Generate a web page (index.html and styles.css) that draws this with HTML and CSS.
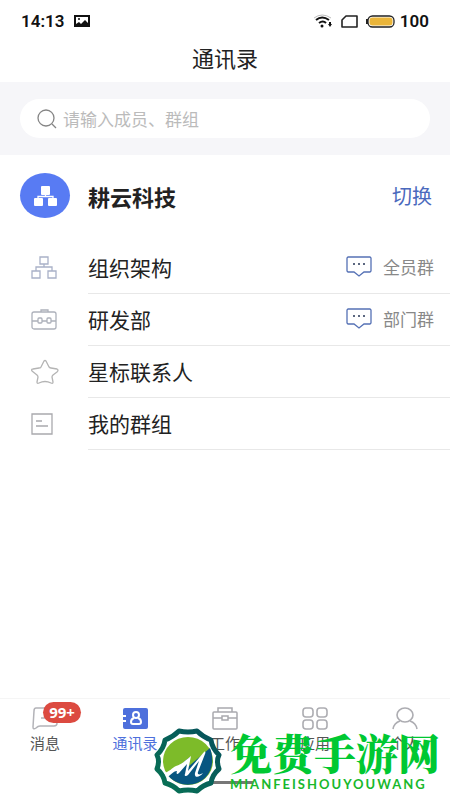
FILE: index.html
```html
<!DOCTYPE html>
<html lang="zh-CN">
<head>
  <meta charset="utf-8">
  <meta name="viewport" content="width=device-width, initial-scale=1">
  <title>通讯录</title>
  <link rel="stylesheet" href="styles.css">
</head>
<body>
  <div class="app">
    <div class="status-bar">
      <span class="time">14:13</span>
      <svg class="photo-icon" width="16" height="12" viewBox="0 0 16 12">
        <rect width="16" height="12" fill="#111"/>
        <path d="M2 2h12v6l-3-3-4 4-2-2-3 2z" fill="#fff"/>
        <circle cx="5" cy="4" r="1" fill="#111"/>
      </svg>
      <div class="status-right">
        <svg width="20" height="16" viewBox="0 0 20 16" fill="none" stroke-width="2">
          <path d="M1 5q8-6 17 0" stroke="#bbb" stroke-width="1"/>
          <path d="M3 7q6-5 13 0M6 10q4-3 7 0" stroke="#111"/>
          <circle cx="9" cy="13" r="1.5" fill="#111"/>
          <path d="M15 11h4l-2 3zM16 9h2v3h-2z" fill="#111"/>
        </svg>
        <svg width="17" height="13" viewBox="0 0 17 13">
          <path d="M5 1h11v11H1V5z" fill="none" stroke="#222" stroke-width="1.6" stroke-linejoin="round"/>
        </svg>
        <svg class="battery" width="29" height="13" viewBox="0 0 29 13">
          <path d="M2 4v5H0V4z" fill="#222"/>
          <rect x="2" y="1" width="26" height="11" rx="4.5" fill="#fff" stroke="#222" stroke-width="1.3"/>
          <rect x="3.5" y="2.5" width="23" height="8" rx="3" fill="#eab53a"/>
        </svg>
        <span class="percent">100</span>
      </div>
    </div>

    <h1 class="title">通讯录</h1>

    <div class="search">
      <label class="search-box">
        <svg width="20" height="20" viewBox="0 0 20 20" fill="none" stroke="#858585" stroke-width="1.3">
          <circle cx="9" cy="9" r="8"/>
          <path d="M15 15l4 4"/>
        </svg>
        <input type="text" placeholder="请输入成员、群组" aria-label="搜索">
      </label>
    </div>

    <div class="company">
      <div class="avatar">
        <svg width="24" height="22" viewBox="0 0 24 22" fill="#fff">
          <rect x="8" y="1" width="9" height="9" rx="1"/>
          <rect x="1" y="13" width="9" height="8" rx="1"/>
          <rect x="15" y="13" width="9" height="8" rx="1"/>
          <path d="M12.5 9v3M5 14v-2.500h15V14" fill="none" stroke="#fff" stroke-width="1.3"/>
        </svg>
      </div>
      <h2>耕云科技</h2>
      <button class="switch">切换</button>
    </div>

    <ul class="list">
      <li>
        <svg class="icon" width="28" height="26" viewBox="0 0 28 26" fill="none" stroke="#a9b1c8" stroke-width="1.3">
          <path d="M9 2h8v7H9zM1 16h8v7H1zM17 16h8v7h-8zM13 9v3M5 16v-4h16v4"/>
        </svg>
        <div class="row">
          <a href="#">组织架构</a>
          <button class="chat">
            <svg width="26" height="22" viewBox="0 0 26 22">
              <path d="M2 1h22l1 1v13l-1 1h-6l-5 4-5-4H2l-1-1V2z" fill="none" stroke="#5571b5" stroke-width="1.3"/>
              <path d="M7 8h2M12 8h2M17 8h2" stroke="#5b6780" stroke-width="2"/>
            </svg>
            <span>全员群</span>
          </button>
        </div>
      </li>
      <li>
        <svg class="icon" width="28" height="26" viewBox="0 0 28 26" fill="none" stroke="#adb1bb" stroke-width="1.3">
          <rect x="1" y="5" width="24" height="17" rx="2"/>
          <path d="M10 5V3h7v2M1 14h6M11 14h5M20 14h5"/>
          <rect x="7" y="11" width="4" height="5" rx="1"/>
          <rect x="16" y="11" width="4" height="5" rx="1"/>
        </svg>
        <div class="row">
          <a href="#">研发部</a>
          <button class="chat">
            <svg width="26" height="22" viewBox="0 0 26 22">
              <path d="M2 1h22l1 1v13l-1 1h-6l-5 4-5-4H2l-1-1V2z" fill="none" stroke="#5571b5" stroke-width="1.3"/>
              <path d="M7 8h2M12 8h2M17 8h2" stroke="#5b6780" stroke-width="2"/>
            </svg>
            <span>部门群</span>
          </button>
        </div>
      </li>
      <li>
        <svg class="icon" width="28" height="26" viewBox="0 0 28 26" fill="none" stroke="#b4b4b4" stroke-width="1.3" stroke-linejoin="round">
          <path d="M13 2q1-1 2 0l3 6q1 1 2 1l6 1q2 1 0 3l-4 3q-1 1-1 2l1 5q0 2-2 1-6-3-12 0-2 1-2-1l1-5q0-1-1-2l-5-4q-1-2 1-2l6-1q2 0 2-1z"/>
        </svg>
        <div class="row"><a href="#">星标联系人</a></div>
      </li>
      <li>
        <svg class="icon" width="28" height="26" viewBox="0 0 28 26" fill="none" stroke="#a9a9ad" stroke-width="1.3">
          <path d="M1 3h20v20H1zM5 10h6M5 15h12"/>
        </svg>
        <div class="row"><a href="#">我的群组</a></div>
      </li>
    </ul>

    <nav class="tabs">
      <a href="#">
        <svg width="26" height="24" viewBox="0 0 26 24" fill="none" stroke="#b3b3b8" stroke-width="1.5">
          <path d="M4 1h18q3 0 3 3v12q0 3-3 3H8q-2 0-4 2-3 2-3-1L2 4q0-3 2-3zM9 11h8"/>
        </svg>
        <span>消息</span>
        <b class="badge">99+</b>
      </a>
      <a href="#" class="active">
        <svg width="26" height="24" viewBox="0 0 26 24">
          <rect x="1" y="1" width="25" height="21" rx="2" fill="#4e70dc"/>
          <path d="M0 9h4M0 14h4" stroke="#fff" stroke-width="2"/>
          <circle cx="14" cy="8" r="3" fill="none" stroke="#fff" stroke-width="2"/>
          <path d="M12 11q-3 1-3 4 0 2 2 2h6q2 0 2-2 0-3-3-4" fill="none" stroke="#fff" stroke-width="2"/>
        </svg>
        <span>通讯录</span>
      </a>
      <a href="#">
        <svg width="26" height="24" viewBox="0 0 26 24" fill="none" stroke="#a9a9ae" stroke-width="1.5">
          <rect x="1" y="5" width="24" height="17" rx="1"/>
          <path d="M6 5V1h14v4M1 11h9M16 11h9M10 9h6v4h-6z"/>
        </svg>
        <span>工作</span>
      </a>
      <a href="#">
        <svg width="26" height="24" viewBox="0 0 26 24" fill="none" stroke="#adadb2" stroke-width="1.6">
          <rect x="1" y="1" width="10" height="9" rx="3"/>
          <rect x="15" y="1" width="10" height="9" rx="3"/>
          <rect x="1" y="13" width="10" height="9" rx="3"/>
          <rect x="15" y="13" width="10" height="9" rx="3"/>
        </svg>
        <span>应用</span>
      </a>
      <a href="#">
        <svg width="26" height="24" viewBox="0 0 26 24" fill="none" stroke="#adadb2" stroke-width="1.6">
          <ellipse cx="13" cy="8" rx="8" ry="7"/>
          <path d="M8 14q-6 2-7 8M18 14q6 2 7 8"/>
        </svg>
        <span>个人</span>
      </a>
    </nav>

    <div class="home-bar"></div>

    <div class="watermark">
      <svg width="68" height="66" viewBox="0 0 68 66">
        <defs>
          <linearGradient id="ring" x1="0" y1="1" x2="1" y2="0">
            <stop offset="0" stop-color="#087354"/>
            <stop offset="1" stop-color="#06505c"/>
          </linearGradient>
        </defs>
        <path d="M25 3q9 2 18 0 6 6 14 9 1 8 8 15-3 6 0 14-7 6-8 14-8 2-14 8-9-2-18 0-6-6-14-8-1-8-8-14 3-8 0-14 7-7 8-15 8-3 14-9z" fill="#fff" stroke="url(#ring)" stroke-width="5" stroke-linejoin="round"/>
        <ellipse cx="34" cy="33" rx="25" ry="24" fill="#7dbb29"/>
        <path d="M12 45c9 0 14-9 24-16l-1 9L56 20c4 11 3 22-5 30-11 10-29 9-39-5z" fill="#075681"/>
        <path d="M10 45c5-1 8-5 12-7 6-2 9-5 15-10l-3 15 16-19c1-1 2 0 1 2l-7 18c-1 3 2 3 5 1-4 5-9 5-8 0l4-12-11 14c-2 2-4 1-3-1l2-10-8 9c-2 2-3 1-2-2-4 0-7 5-10 6z" fill="#fff"/>
      </svg>
      <div class="brand">
        <strong>免费手游网</strong>
        <span>MIANFEISHOUYOUWANG</span>
      </div>
    </div>
  </div>
</body>
</html>
```
FILE: styles.css
```css
* {
  box-sizing: border-box;
}

body {
  margin: 0;
  background: #fff;
  color: #222;
  font-family: "Noto Sans CJK SC", sans-serif;
}

.app {
  position: relative;
  display: flex;
  flex-direction: column;
  min-height: 100vh;
}

.status-bar {
  display: flex;
  align-items: center;
  height: 42px;
  padding: 0 21px;
  font-family: Roboto, sans-serif;
  font-size: 17px;
  font-weight: 600;
  color: #111;
}

.photo-icon {
  margin-left: 10px;
}

.status-right {
  display: flex;
  align-items: center;
  gap: 8px;
  margin-left: auto;
}

.percent {
  margin-left: -3px;
}

.title {
  height: 40px;
  margin: 0;
  font-size: 22px;
  font-weight: 400;
  line-height: 30px;
  text-align: center;
}

.search {
  padding: 17px 20px;
  background: #f6f6f9;
}

.search-box {
  display: flex;
  align-items: center;
  gap: 6px;
  height: 39px;
  padding: 0 17px;
  border-radius: 20px;
  background: #fff;
}

.search-box input {
  flex: 1;
  min-width: 0;
  padding: 0;
  border: none;
  outline: none;
  background: none;
  font: inherit;
  font-size: 17px;
}

.search-box input::placeholder {
  color: #bbb;
}

.company {
  display: flex;
  align-items: center;
  height: 87px;
  padding: 0 18px 6px 20px;
}

.avatar {
  display: flex;
  align-items: center;
  justify-content: center;
  width: 50px;
  height: 45px;
  border-radius: 50%;
  background: #587bf3;
}

.company h2 {
  flex: 1;
  margin: 0 0 0 18px;
  font-size: 22px;
  line-height: 32px;
  font-weight: 700;
}

button {
  padding: 0;
  border: none;
  background: none;
  font: inherit;
  cursor: pointer;
}

.switch {
  color: #4a69bd;
  font-size: 20px;
}

.list {
  flex: 1;
  margin: 0;
  padding: 0;
  list-style: none;
}

.list li {
  display: flex;
  align-items: center;
  height: 52px;
  padding-left: 31px;
}

.row {
  display: flex;
  flex: 1;
  align-items: center;
  justify-content: space-between;
  height: 52px;
  margin-left: 29px;
  padding: 0 16px 2px 0;
  border-bottom: 1px solid #e8e8e8;
}

.row a {
  color: #222;
  font-size: 21px;
  text-decoration: none;
}

.chat {
  display: flex;
  align-items: center;
  gap: 11px;
  color: #888;
  font-size: 17px;
}

.tabs {
  display: flex;
  height: 102px;
  padding-top: 8px;
  border-top: 1px solid #f5f5f5;
}

.tabs a {
  position: relative;
  display: flex;
  flex: 1;
  flex-direction: column;
  align-items: center;
  color: #555;
  font-size: 15px;
  line-height: 24px;
  text-decoration: none;
}

.tabs .active {
  color: #4e70dc;
}

.badge {
  position: absolute;
  top: -5px;
  left: 43px;
  width: 38px;
  border-radius: 11px;
  background: #dc4a40;
  color: #fff;
  font-family: "Noto Sans", sans-serif;
  font-size: 15px;
  line-height: 21px;
  text-align: center;
}

.home-bar {
  position: absolute;
  bottom: 16px;
  left: 50%;
  width: 56px;
  height: 3px;
  margin-left: -28px;
  background: #777;
}

.watermark {
  position: absolute;
  right: 10px;
  bottom: 6px;
  display: flex;
  align-items: center;
  gap: 8px;
  color: #00c832;
}

.brand {
  display: flex;
  flex-direction: column;
  white-space: nowrap;
}

.brand strong {
  font-family: "Noto Serif CJK SC", "Noto Sans CJK SC", serif;
  font-size: 42px;
  font-weight: 900;
  line-height: 46px;
}

.brand span {
  color: #18b82c;
  font-family: Lato, sans-serif;
  font-size: 13px;
  font-weight: 700;
  line-height: 18px;
  letter-spacing: 2px;
}
```
